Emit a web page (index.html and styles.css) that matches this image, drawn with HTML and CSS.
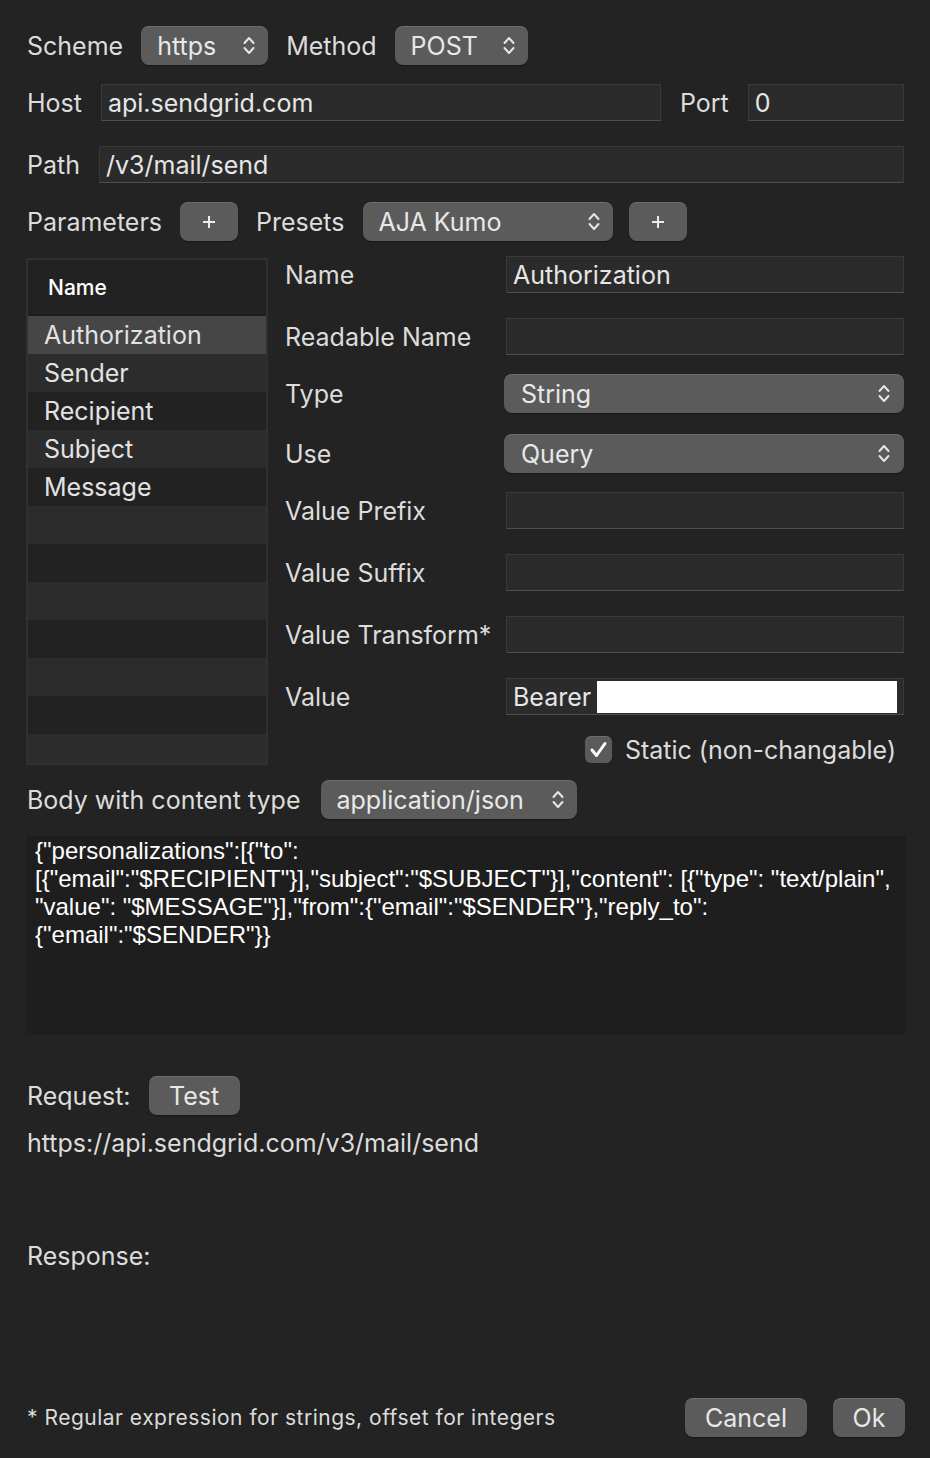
FILE: index.html
```html
<!DOCTYPE html>
<html lang="en">
<head>
    <meta charset="UTF-8">
    <title>Edit Request</title>
    <link rel="stylesheet" href="styles.css">
</head>
<body>
<div class="window">

    <div class="row row-top">
        <span class="lbl">Scheme</span>
        <div class="popup pop-scheme"><span>https</span>
            <svg class="chev" viewBox="0 0 14 21"><path d="M2.5 8 L7 3 L11.5 8 M2.5 13 L7 18 L11.5 13"/></svg>
        </div>
        <span class="lbl">Method</span>
        <div class="popup pop-method"><span>POST</span>
            <svg class="chev" viewBox="0 0 14 21"><path d="M2.5 8 L7 3 L11.5 8 M2.5 13 L7 18 L11.5 13"/></svg>
        </div>
    </div>

    <div class="row row-field row-host">
        <span class="lbl">Host</span>
        <div class="field f-host">api.sendgrid.com</div>
        <span class="lbl">Port</span>
        <div class="field f-port">0</div>
    </div>

    <div class="row row-field row-path">
        <span class="lbl">Path</span>
        <div class="field f-path">/v3/mail/send</div>
    </div>

    <div class="row row-top row-params">
        <span class="lbl">Parameters</span>
        <div class="btn btn-plus">
            <svg class="plus" viewBox="0 0 14 14"><path d="M7 1 V13 M1 7 H13"/></svg>
        </div>
        <span class="lbl">Presets</span>
        <div class="popup pop-presets"><span>AJA Kumo</span>
            <svg class="chev" viewBox="0 0 14 21"><path d="M2.5 8 L7 3 L11.5 8 M2.5 13 L7 18 L11.5 13"/></svg>
        </div>
        <div class="btn btn-plus btn-plus2">
            <svg class="plus" viewBox="0 0 14 14"><path d="M7 1 V13 M1 7 H13"/></svg>
        </div>
    </div>

    <div class="main">
        <div class="table">
            <div class="thead">Name</div>
            <div class="trow selected">Authorization</div>
            <div class="trow alt">Sender</div>
            <div class="trow">Recipient</div>
            <div class="trow alt">Subject</div>
            <div class="trow">Message</div>
            <div class="trow alt"></div>
            <div class="trow"></div>
            <div class="trow alt"></div>
            <div class="trow"></div>
            <div class="trow alt"></div>
            <div class="trow"></div>
            <div class="trow alt last"></div>
        </div>

        <div class="form">
            <div class="frow">
                <span class="lbl">Name</span>
                <div class="field">Authorization</div>
            </div>
            <div class="frow gap25">
                <span class="lbl">Readable Name</span>
                <div class="field"></div>
            </div>
            <div class="frow frow-pop gap19">
                <span class="lbl">Type</span>
                <div class="popup pop-wide"><span>String</span>
                    <svg class="chev" viewBox="0 0 14 21"><path d="M2.5 8 L7 3 L11.5 8 M2.5 13 L7 18 L11.5 13"/></svg>
                </div>
            </div>
            <div class="frow frow-pop gap21">
                <span class="lbl">Use</span>
                <div class="popup pop-wide"><span>Query</span>
                    <svg class="chev" viewBox="0 0 14 21"><path d="M2.5 8 L7 3 L11.5 8 M2.5 13 L7 18 L11.5 13"/></svg>
                </div>
            </div>
            <div class="frow gap19">
                <span class="lbl">Value Prefix</span>
                <div class="field"></div>
            </div>
            <div class="frow gap25">
                <span class="lbl">Value Suffix</span>
                <div class="field"></div>
            </div>
            <div class="frow gap25">
                <span class="lbl">Value Transform*</span>
                <div class="field"></div>
            </div>
            <div class="frow gap25">
                <span class="lbl">Value</span>
                <div class="field f-value">Bearer<span class="redact"></span></div>
            </div>
            <div class="checkrow">
                <span class="checkbox">
                    <svg viewBox="0 0 27 27"><path d="M7 14 L11.5 19.5 L20 7.5"/></svg>
                </span>
                <span class="lbl">Static (non-changable)</span>
            </div>
        </div>
    </div>

    <div class="row row-top row-body">
        <span class="lbl">Body with content type</span>
        <div class="popup pop-ctype"><span>application/json</span>
            <svg class="chev" viewBox="0 0 14 21"><path d="M2.5 8 L7 3 L11.5 8 M2.5 13 L7 18 L11.5 13"/></svg>
        </div>
    </div>

    <div class="bodytext">{"personalizations":[{"to":
[{"email":"$RECIPIENT"}],"subject":"$SUBJECT"}],"content": [{"type": "text/plain",
"value": "$MESSAGE"}],"from":{"email":"$SENDER"},"reply_to":
{"email":"$SENDER"}}</div>

    <div class="row row-top row-request">
        <span class="lbl">Request:</span>
        <div class="btn btn-test">Test</div>
    </div>
    <div class="plain url">https://api.sendgrid.com/v3/mail/send</div>

    <div class="plain response">Response:</div>

    <div class="footer">
        <span class="note">* Regular expression for strings, offset for integers</span>
        <div class="actions">
            <div class="btn btn-cancel">Cancel</div>
            <div class="btn btn-ok">Ok</div>
        </div>
    </div>

</div>
</body>
</html>
```

FILE: styles.css
```css
body {
    margin: 0;
    background: #232323;
    font-family: Inter, "Noto Sans", sans-serif;
    font-size: 25px;
    color: #dcdcdc;
}

.window {
    width: 930px;
    height: 1458px;
    box-sizing: border-box;
    padding: 26px 26px 0 27px;
    display: flex;
    flex-direction: column;
}

.lbl { white-space: nowrap; }

.row { display: flex; align-items: center; }
.row-top { height: 39px; gap: 18px; }
.row-field { height: 37px; gap: 19px; }
.row-host { margin-top: 19px; }
.row-path { margin-top: 25px; }
.row-params { margin-top: 19px; }

/* text fields */
.field {
    height: 37px;
    box-sizing: border-box;
    background: #2b2b2b;
    border: 1px solid #393939;
    border-bottom-color: #4e4e4e;
    color: #e6e6e6;
    padding-left: 6px;
    display: flex;
    align-items: center;
    white-space: nowrap;
    overflow: hidden;
}
.f-host { width: 560px; }
.f-port { flex: 1; }
.f-path { flex: 1; }

/* popups & buttons */
.popup, .btn {
    height: 39px;
    box-sizing: border-box;
    background: #5b5b5b;
    border-radius: 8px;
    box-shadow: inset 0 1px 0 rgba(255,255,255,0.12), 0 1px 1px rgba(0,0,0,0.35);
    color: #e8e8e8;
    display: flex;
    align-items: center;
}
.popup {
    justify-content: space-between;
    padding: 0 12px 0 16px;
}
.chev {
    width: 14px;
    height: 21px;
    fill: none;
    stroke: #e6e6e6;
    stroke-width: 2;
    stroke-linecap: round;
    stroke-linejoin: round;
}
.pop-scheme { width: 127px; }
.pop-method { width: 133px; }
.pop-presets { width: 250px; }
.pop-ctype { width: 256px; }
.pop-wide { width: 400px; margin-left: -2px; padding-left: 17px; padding-right: 13px; }

.btn { justify-content: center; }
.btn-plus { width: 58px; }
.btn-plus2 { margin-left: -2px; }
.plus {
    width: 14px;
    height: 14px;
    fill: none;
    stroke: #ececec;
    stroke-width: 2;
}

/* parameter table + form */
.main {
    display: flex;
    margin-top: 15px;
    gap: 17px;
}
.table {
    width: 244px;
    height: 507px;
    margin: 2px 0 0 -1px;
    box-sizing: border-box;
    border: 2px solid #303030;
    background: #222;
    overflow: hidden;
}
.thead {
    height: 54px;
    padding-left: 20px;
    display: flex;
    align-items: center;
    font-size: 21px;
    font-weight: 500;
    color: #fff;
    border-bottom: 2px solid #1d1d1d;
}
.trow {
    height: 38px;
    padding-left: 16px;
    display: flex;
    align-items: center;
    color: #e2e2e2;
}
.trow.alt { background: #2c2c2c; }
.trow.selected { background: #464646; }

.form {
    flex: 1;
    display: flex;
    flex-direction: column;
}
.frow {
    display: grid;
    grid-template-columns: 221px 1fr;
    align-items: center;
    height: 37px;
}
.frow-pop { height: 39px; }
.gap25 { margin-top: 25px; }
.gap19 { margin-top: 19px; }
.gap21 { margin-top: 21px; }
.f-value { padding-right: 6px; }
.redact {
    flex: 1;
    align-self: stretch;
    margin: 2px 0 1px 6px;
    background: #fff;
}

.checkrow {
    margin-top: 21px;
    height: 27px;
    display: flex;
    align-items: center;
    justify-content: flex-end;
    gap: 13px;
    padding-right: 8px;
}
.checkbox {
    width: 27px;
    height: 27px;
    border-radius: 6px;
    background: #5b5b5b;
    box-shadow: inset 0 1px 0 rgba(255,255,255,0.12);
}
.checkbox svg {
    width: 27px;
    height: 27px;
    fill: none;
    stroke: #fff;
    stroke-width: 3;
    stroke-linecap: round;
    stroke-linejoin: round;
}

.row-body { margin-top: 15px; gap: 20px; }

.bodytext {
    margin: 17px -2px 0 -1px;
    height: 199px;
    box-sizing: border-box;
    background: #1e1e1e;
    padding: 1px 9px 0;
    font-family: "Liberation Sans", Arial, sans-serif;
    font-size: 24px;
    line-height: 28px;
    color: #fff;
    white-space: pre;
    overflow: hidden;
}

.row-request { margin-top: 41px; }
.btn-test { width: 91px; }

.plain { height: 29px; line-height: 29px; }
.url { margin-top: 14px; }
.response { margin-top: 84px; }

.footer {
    margin-top: auto;
    margin-bottom: 21px;
    margin-right: -1px;
    display: flex;
    align-items: center;
    justify-content: space-between;
}
.note { font-size: 21px; letter-spacing: 0.5px; color: #dcdcdc; }
.actions { display: flex; gap: 26px; }
.btn-cancel { width: 122px; }
.btn-ok { width: 72px; }
```
